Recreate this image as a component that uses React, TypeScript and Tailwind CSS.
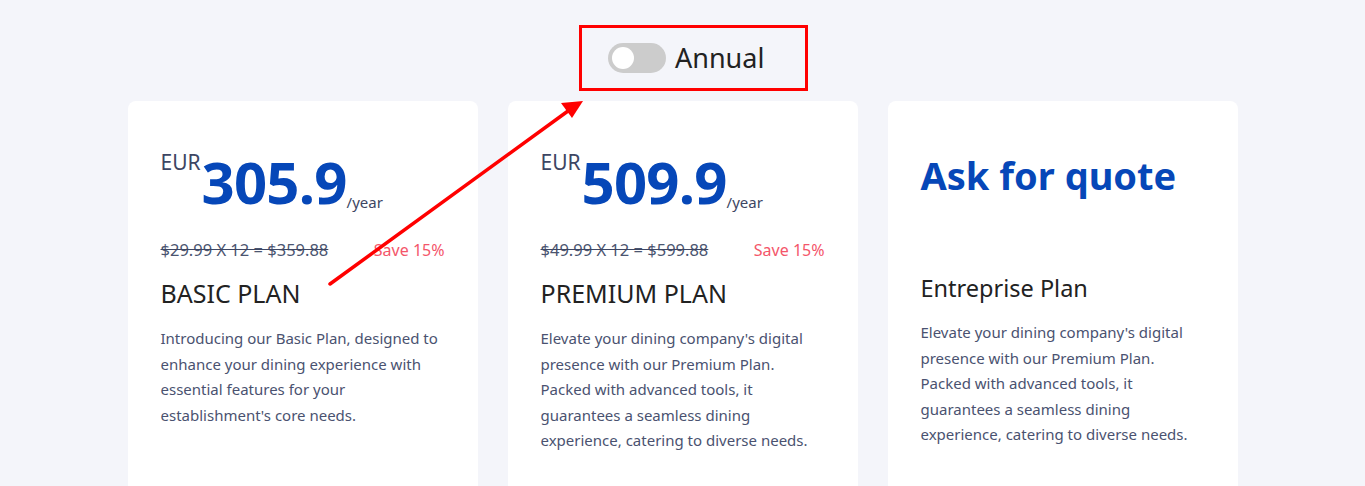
import React from "react";

type Plan = {
  price?: string;
  old?: string;
  title: string;
  desc: string;
  quote?: boolean;
};

const plans: Plan[] = [
  {
    price: "305.9",
    old: "$29.99 X 12 = $359.88",
    title: "BASIC PLAN",
    desc: "Introducing our Basic Plan, designed to enhance your dining experience with essential features for your establishment's core needs.",
  },
  {
    price: "509.9",
    old: "$49.99 X 12 = $599.88",
    title: "PREMIUM PLAN",
    desc: "Elevate your dining company's digital presence with our Premium Plan. Packed with advanced tools, it guarantees a seamless dining experience, catering to diverse needs.",
  },
  {
    quote: true,
    title: "Entreprise Plan",
    desc: "Elevate your dining company's digital presence with our Premium Plan. Packed with advanced tools, it guarantees a seamless dining experience, catering to diverse needs.",
  },
];

function Card({ p }: { p: Plan }) {
  return (
    <div className="w-[350px] h-[420px] shrink-0 rounded-lg bg-white px-[33px] pt-[48px]">
      {p.quote ? (
        <>
          <div className="text-[38px] font-bold leading-[52px] text-[#0647b8]">
            Ask for quote
          </div>
          <div className="mt-[72px] text-[23.5px] leading-[30px] text-[#222]">{p.title}</div>
          <p className="mt-[17px] text-[15px] leading-[25.5px] text-[#4a5270]">{p.desc}</p>
        </>
      ) : (
        <>
          <div className="flex items-start">
            <span className="mt-[0px] text-[21px] leading-[26px] text-[#3d4663]">EUR</span>
            <span className="ml-[1px] mt-[0px] text-[58px] font-bold leading-[66px] text-[#0647b8] tracking-[-0.8px]">
              {p.price}
            </span>
            <span className="mt-[44px] text-[15px] leading-[18px] text-[#3d4663]">/year</span>
          </div>
          <div className="mt-[24px] flex items-center justify-between">
            <span className="text-[16.5px] leading-[22px] text-[#4b5570] line-through decoration-[#3d4663]">
              {p.old}
            </span>
            <span className="text-[16px] leading-[22px] text-[#f4566a]">Save 15%</span>
          </div>
          <div className="mt-[17px] text-[25px] leading-[30px] text-[#222]">{p.title}</div>
          <p className="mt-[18px] text-[15px] leading-[25.5px] text-[#4a5270]">{p.desc}</p>
        </>
      )}
    </div>
  );
}

export default function App() {
  return (
    <div
      className="relative h-[486px] w-full overflow-hidden bg-[#f4f5fa]"
      style={{ fontFamily: '"Noto Sans", "Open Sans", sans-serif' }}
    >
      <div className="flex justify-center pt-[25px]">
        <div className="ml-[22px] flex h-[66px] w-[229px] items-center gap-[9px] border-[3px] border-[#ff0000] pl-[26px]">
          <div className="relative h-[30px] w-[58px] shrink-0 rounded-full bg-[#cccccc]">
            <div className="absolute left-[4px] top-[4px] h-[22px] w-[22px] rounded-full bg-white" />
          </div>
          <span className="text-[27px] leading-[32px] text-[#222]">Annual</span>
        </div>
      </div>
      <div className="mt-[10px] flex justify-center gap-[30px]">
        {plans.map((p, i) => (
          <Card key={i} p={p} />
        ))}
      </div>
      <svg className="pointer-events-none absolute left-0 top-0" width="1365" height="486">
        <line x1="330" y1="284" x2="568" y2="111" stroke="#ff0000" strokeWidth="3.5" strokeLinecap="round" />
        <polygon points="583,101 561,103 572,118" fill="#ff0000" />
      </svg>
    </div>
  );
}
